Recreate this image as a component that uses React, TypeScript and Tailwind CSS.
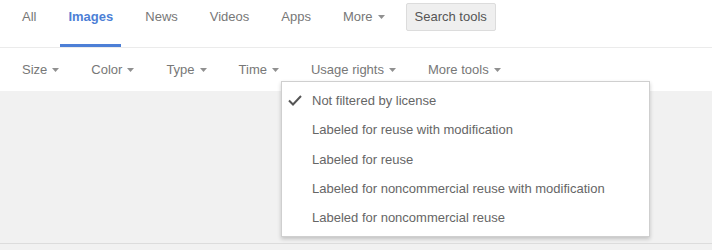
const tabs = [
  { label: "All" },
  { label: "Images", active: true },
  { label: "News" },
  { label: "Videos" },
  { label: "Apps" },
  { label: "More", menu: true },
];

const tools = ["Size", "Color", "Type", "Time", "Usage rights", "More tools"];

const licenses = [
  "Not filtered by license",
  "Labeled for reuse with modification",
  "Labeled for reuse",
  "Labeled for noncommercial reuse with modification",
  "Labeled for noncommercial reuse",
];

function Caret() {
  return (
    <svg width="7" height="4" viewBox="0 0 7 4" className="ml-[5px] shrink-0">
      <path d="M0 0 L7 0 L3.5 4 Z" fill="#909090" />
    </svg>
  );
}

function Check() {
  return (
    <svg width="14" height="11" viewBox="0 0 14 11" className="ml-[6px]">
      <path d="M1 5.5 L5 9.5 L13 1" fill="none" stroke="#555" strokeWidth="2" />
    </svg>
  );
}

export default function App() {
  return (
    <div className="relative w-[712px] h-[250px] overflow-hidden bg-white text-[13px] font-['Liberation_Sans',Arial,sans-serif]">
      <div className="flex h-[48px] pl-[6px] border-b border-[#ebebeb]">
        {tabs.map((t) => (
          <div key={t.label} className="flex flex-col h-[47px] px-2">
            <div
              className={
                "flex items-center px-2 pt-[9px] leading-[15px] " +
                (t.active ? "font-bold text-[#4d7fd6]" : "text-[#777]")
              }
            >
              {t.label}
              {t.menu && <Caret />}
            </div>
            {t.active && <div className="mt-auto h-[3px] bg-[#4d7fd6]" />}
          </div>
        ))}
        <div className="ml-[5px] mt-[3px] h-[28px] px-[8px] leading-[26px] border border-[#dcdcdc] rounded-[2px] bg-[#efefef] text-[#555]">
          Search tools
        </div>
      </div>

      <div className="flex h-[43px] pl-[22px] pt-[14px] gap-[32px]">
        {tools.map((t) => (
          <div key={t} className="flex items-center h-[15px] leading-[15px] text-[#777]">
            {t}
            <Caret />
          </div>
        ))}
      </div>

      <div className="h-[153px] bg-[#f1f1f1] border-b border-[#dcdcdc]" />
      <div className="h-[6px] bg-[#f1f1f1]" />

      <div className="absolute left-[281px] top-[81px] w-[369px] h-[156px] bg-white border border-[#cfcfcf] shadow-[0_2px_4px_rgba(0,0,0,0.2)] pt-[4px]">
        {licenses.map((l, i) => (
          <div key={l} className="flex items-center h-[29.3px] leading-[29px] text-[#666]">
            <div className="w-[30px] flex items-center">{i === 0 && <Check />}</div>
            {l}
          </div>
        ))}
      </div>
    </div>
  );
}
